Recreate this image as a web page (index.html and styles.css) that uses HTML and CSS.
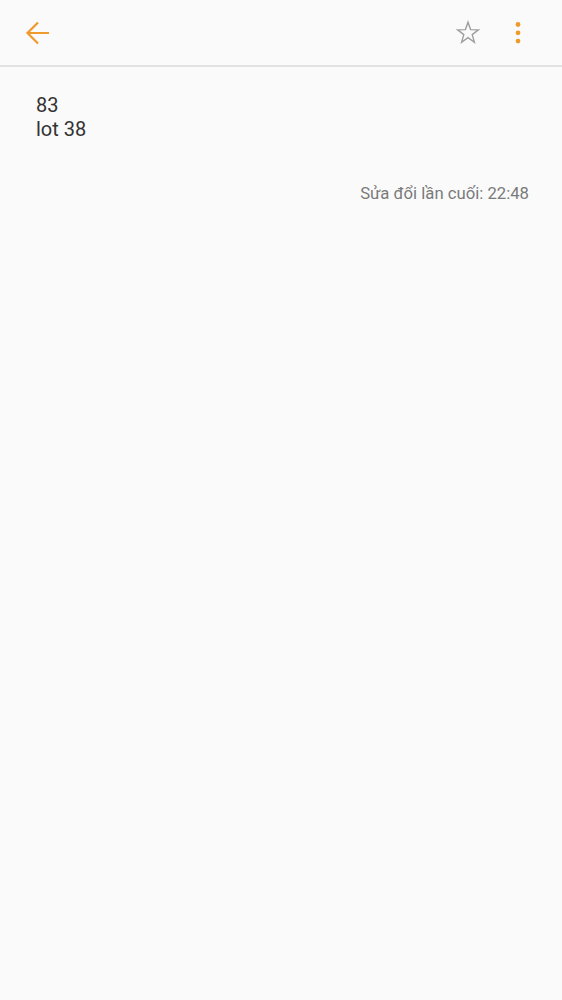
FILE: index.html
```html
<!DOCTYPE html>
<html>
<head>
<meta charset="utf-8">
<link rel="stylesheet" href="styles.css">
</head>
<body>
<div class="app">
  <header class="bar">
    <button class="icon back" aria-label="Back">
      <svg width="26" height="26" viewBox="0 0 26 26"><path d="M24 13H3M13 2.5L2.5 13L13 23.5" fill="none" stroke="#ee9a2c" stroke-width="2.2"/></svg>
    </button>
    <div class="spacer"></div>
    <button class="icon star" aria-label="Favourite">
      <svg width="26" height="26" viewBox="0 0 26 26"><path d="M13 2.2L15.6 9.6L23.4 9.8L17.2 14.6L19.4 22.2L13 17.7L6.6 22.2L8.8 14.6L2.6 9.8L10.4 9.6Z" fill="none" stroke="#9e9e9e" stroke-width="1.4" stroke-linejoin="miter"/></svg>
    </button>
    <button class="icon more" aria-label="More">
      <svg width="8" height="26" viewBox="0 0 8 26"><circle cx="4" cy="4.5" r="2.4" fill="#ee9a2c"/><circle cx="4" cy="12.8" r="2.4" fill="#ee9a2c"/><circle cx="4" cy="21.1" r="2.4" fill="#ee9a2c"/></svg>
    </button>
  </header>
  <main class="note">
    <div class="body">83<br>lot 38</div>
    <div class="meta">Sửa đổi lần cuối: 22:48</div>
  </main>
</div>
</body>
</html>
```
FILE: styles.css
```css
html, body {
  margin: 0;
  padding: 0;
  background: #fafafa;
  font-family: Roboto, "Noto Sans", sans-serif;
}
.app {
  width: 562px;
  min-height: 1000px;
  background: #fafafa;
}
.bar {
  height: 65px;
  display: flex;
  align-items: center;
  border-bottom: 2px solid #e2e2e2;
  box-sizing: content-box;
}
.icon {
  border: 0;
  background: none;
  padding: 0;
  display: flex;
  align-items: center;
  justify-content: center;
}
.back {
  margin-left: 25px;
  margin-top: 1px;
}
.spacer { flex: 1; }
.star {
  margin-right: 33px;
}
.more {
  margin-right: 40px;
  margin-top: 1px;
}
.note {
  padding: 26px 33px 0 36px;
}
.body {
  font-size: 20px;
  line-height: 24px;
  color: #333333;
}
.meta {
  margin-top: 43px;
  text-align: right;
  font-size: 16.7px;
  color: #7a7a7a;
}
```
